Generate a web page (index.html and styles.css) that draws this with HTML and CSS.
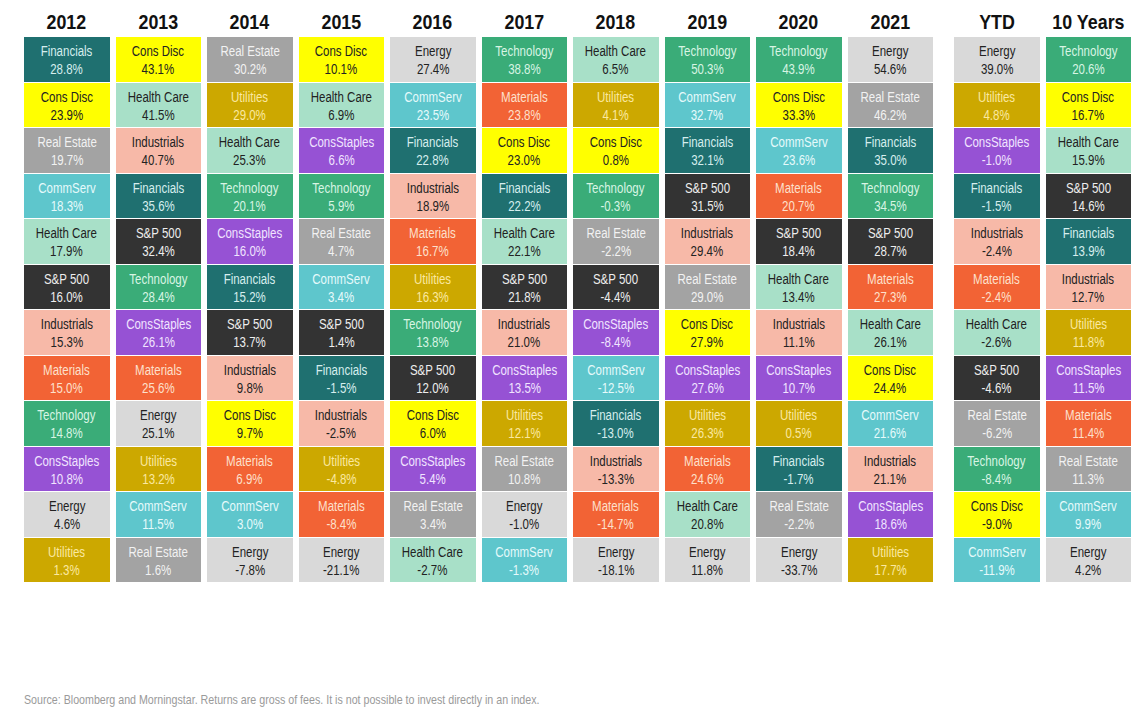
FILE: index.html
```html
<!DOCTYPE html>
<html>
<head>
<meta charset="utf-8">
<link rel="stylesheet" href="styles.css">
</head>
<body>
<div class="page">
  <div class="chart">
    <div class="group">
      <div class="col">
        <div class="hdr"><span class="t">2012</span></div>
        <div class="cell fin"><span class="t">Financials<br>28.8%</span></div>
        <div class="cell cd"><span class="t">Cons Disc<br>23.9%</span></div>
        <div class="cell re"><span class="t">Real Estate<br>19.7%</span></div>
        <div class="cell cs"><span class="t">CommServ<br>18.3%</span></div>
        <div class="cell hc"><span class="t">Health Care<br>17.9%</span></div>
        <div class="cell sp"><span class="t">S&amp;P 500<br>16.0%</span></div>
        <div class="cell ind"><span class="t">Industrials<br>15.3%</span></div>
        <div class="cell mat"><span class="t">Materials<br>15.0%</span></div>
        <div class="cell tech"><span class="t">Technology<br>14.8%</span></div>
        <div class="cell stap"><span class="t">ConsStaples<br>10.8%</span></div>
        <div class="cell en"><span class="t">Energy<br>4.6%</span></div>
        <div class="cell util"><span class="t">Utilities<br>1.3%</span></div>
      </div>
      <div class="col">
        <div class="hdr"><span class="t">2013</span></div>
        <div class="cell cd"><span class="t">Cons Disc<br>43.1%</span></div>
        <div class="cell hc"><span class="t">Health Care<br>41.5%</span></div>
        <div class="cell ind"><span class="t">Industrials<br>40.7%</span></div>
        <div class="cell fin"><span class="t">Financials<br>35.6%</span></div>
        <div class="cell sp"><span class="t">S&amp;P 500<br>32.4%</span></div>
        <div class="cell tech"><span class="t">Technology<br>28.4%</span></div>
        <div class="cell stap"><span class="t">ConsStaples<br>26.1%</span></div>
        <div class="cell mat"><span class="t">Materials<br>25.6%</span></div>
        <div class="cell en"><span class="t">Energy<br>25.1%</span></div>
        <div class="cell util"><span class="t">Utilities<br>13.2%</span></div>
        <div class="cell cs"><span class="t">CommServ<br>11.5%</span></div>
        <div class="cell re"><span class="t">Real Estate<br>1.6%</span></div>
      </div>
      <div class="col">
        <div class="hdr"><span class="t">2014</span></div>
        <div class="cell re"><span class="t">Real Estate<br>30.2%</span></div>
        <div class="cell util"><span class="t">Utilities<br>29.0%</span></div>
        <div class="cell hc"><span class="t">Health Care<br>25.3%</span></div>
        <div class="cell tech"><span class="t">Technology<br>20.1%</span></div>
        <div class="cell stap"><span class="t">ConsStaples<br>16.0%</span></div>
        <div class="cell fin"><span class="t">Financials<br>15.2%</span></div>
        <div class="cell sp"><span class="t">S&amp;P 500<br>13.7%</span></div>
        <div class="cell ind"><span class="t">Industrials<br>9.8%</span></div>
        <div class="cell cd"><span class="t">Cons Disc<br>9.7%</span></div>
        <div class="cell mat"><span class="t">Materials<br>6.9%</span></div>
        <div class="cell cs"><span class="t">CommServ<br>3.0%</span></div>
        <div class="cell en"><span class="t">Energy<br>-7.8%</span></div>
      </div>
      <div class="col">
        <div class="hdr"><span class="t">2015</span></div>
        <div class="cell cd"><span class="t">Cons Disc<br>10.1%</span></div>
        <div class="cell hc"><span class="t">Health Care<br>6.9%</span></div>
        <div class="cell stap"><span class="t">ConsStaples<br>6.6%</span></div>
        <div class="cell tech"><span class="t">Technology<br>5.9%</span></div>
        <div class="cell re"><span class="t">Real Estate<br>4.7%</span></div>
        <div class="cell cs"><span class="t">CommServ<br>3.4%</span></div>
        <div class="cell sp"><span class="t">S&amp;P 500<br>1.4%</span></div>
        <div class="cell fin"><span class="t">Financials<br>-1.5%</span></div>
        <div class="cell ind"><span class="t">Industrials<br>-2.5%</span></div>
        <div class="cell util"><span class="t">Utilities<br>-4.8%</span></div>
        <div class="cell mat"><span class="t">Materials<br>-8.4%</span></div>
        <div class="cell en"><span class="t">Energy<br>-21.1%</span></div>
      </div>
      <div class="col">
        <div class="hdr"><span class="t">2016</span></div>
        <div class="cell en"><span class="t">Energy<br>27.4%</span></div>
        <div class="cell cs"><span class="t">CommServ<br>23.5%</span></div>
        <div class="cell fin"><span class="t">Financials<br>22.8%</span></div>
        <div class="cell ind"><span class="t">Industrials<br>18.9%</span></div>
        <div class="cell mat"><span class="t">Materials<br>16.7%</span></div>
        <div class="cell util"><span class="t">Utilities<br>16.3%</span></div>
        <div class="cell tech"><span class="t">Technology<br>13.8%</span></div>
        <div class="cell sp"><span class="t">S&amp;P 500<br>12.0%</span></div>
        <div class="cell cd"><span class="t">Cons Disc<br>6.0%</span></div>
        <div class="cell stap"><span class="t">ConsStaples<br>5.4%</span></div>
        <div class="cell re"><span class="t">Real Estate<br>3.4%</span></div>
        <div class="cell hc"><span class="t">Health Care<br>-2.7%</span></div>
      </div>
      <div class="col">
        <div class="hdr"><span class="t">2017</span></div>
        <div class="cell tech"><span class="t">Technology<br>38.8%</span></div>
        <div class="cell mat"><span class="t">Materials<br>23.8%</span></div>
        <div class="cell cd"><span class="t">Cons Disc<br>23.0%</span></div>
        <div class="cell fin"><span class="t">Financials<br>22.2%</span></div>
        <div class="cell hc"><span class="t">Health Care<br>22.1%</span></div>
        <div class="cell sp"><span class="t">S&amp;P 500<br>21.8%</span></div>
        <div class="cell ind"><span class="t">Industrials<br>21.0%</span></div>
        <div class="cell stap"><span class="t">ConsStaples<br>13.5%</span></div>
        <div class="cell util"><span class="t">Utilities<br>12.1%</span></div>
        <div class="cell re"><span class="t">Real Estate<br>10.8%</span></div>
        <div class="cell en"><span class="t">Energy<br>-1.0%</span></div>
        <div class="cell cs"><span class="t">CommServ<br>-1.3%</span></div>
      </div>
      <div class="col">
        <div class="hdr"><span class="t">2018</span></div>
        <div class="cell hc"><span class="t">Health Care<br>6.5%</span></div>
        <div class="cell util"><span class="t">Utilities<br>4.1%</span></div>
        <div class="cell cd"><span class="t">Cons Disc<br>0.8%</span></div>
        <div class="cell tech"><span class="t">Technology<br>-0.3%</span></div>
        <div class="cell re"><span class="t">Real Estate<br>-2.2%</span></div>
        <div class="cell sp"><span class="t">S&amp;P 500<br>-4.4%</span></div>
        <div class="cell stap"><span class="t">ConsStaples<br>-8.4%</span></div>
        <div class="cell cs"><span class="t">CommServ<br>-12.5%</span></div>
        <div class="cell fin"><span class="t">Financials<br>-13.0%</span></div>
        <div class="cell ind"><span class="t">Industrials<br>-13.3%</span></div>
        <div class="cell mat"><span class="t">Materials<br>-14.7%</span></div>
        <div class="cell en"><span class="t">Energy<br>-18.1%</span></div>
      </div>
      <div class="col">
        <div class="hdr"><span class="t">2019</span></div>
        <div class="cell tech"><span class="t">Technology<br>50.3%</span></div>
        <div class="cell cs"><span class="t">CommServ<br>32.7%</span></div>
        <div class="cell fin"><span class="t">Financials<br>32.1%</span></div>
        <div class="cell sp"><span class="t">S&amp;P 500<br>31.5%</span></div>
        <div class="cell ind"><span class="t">Industrials<br>29.4%</span></div>
        <div class="cell re"><span class="t">Real Estate<br>29.0%</span></div>
        <div class="cell cd"><span class="t">Cons Disc<br>27.9%</span></div>
        <div class="cell stap"><span class="t">ConsStaples<br>27.6%</span></div>
        <div class="cell util"><span class="t">Utilities<br>26.3%</span></div>
        <div class="cell mat"><span class="t">Materials<br>24.6%</span></div>
        <div class="cell hc"><span class="t">Health Care<br>20.8%</span></div>
        <div class="cell en"><span class="t">Energy<br>11.8%</span></div>
      </div>
      <div class="col">
        <div class="hdr"><span class="t">2020</span></div>
        <div class="cell tech"><span class="t">Technology<br>43.9%</span></div>
        <div class="cell cd"><span class="t">Cons Disc<br>33.3%</span></div>
        <div class="cell cs"><span class="t">CommServ<br>23.6%</span></div>
        <div class="cell mat"><span class="t">Materials<br>20.7%</span></div>
        <div class="cell sp"><span class="t">S&amp;P 500<br>18.4%</span></div>
        <div class="cell hc"><span class="t">Health Care<br>13.4%</span></div>
        <div class="cell ind"><span class="t">Industrials<br>11.1%</span></div>
        <div class="cell stap"><span class="t">ConsStaples<br>10.7%</span></div>
        <div class="cell util"><span class="t">Utilities<br>0.5%</span></div>
        <div class="cell fin"><span class="t">Financials<br>-1.7%</span></div>
        <div class="cell re"><span class="t">Real Estate<br>-2.2%</span></div>
        <div class="cell en"><span class="t">Energy<br>-33.7%</span></div>
      </div>
      <div class="col">
        <div class="hdr"><span class="t">2021</span></div>
        <div class="cell en"><span class="t">Energy<br>54.6%</span></div>
        <div class="cell re"><span class="t">Real Estate<br>46.2%</span></div>
        <div class="cell fin"><span class="t">Financials<br>35.0%</span></div>
        <div class="cell tech"><span class="t">Technology<br>34.5%</span></div>
        <div class="cell sp"><span class="t">S&amp;P 500<br>28.7%</span></div>
        <div class="cell mat"><span class="t">Materials<br>27.3%</span></div>
        <div class="cell hc"><span class="t">Health Care<br>26.1%</span></div>
        <div class="cell cd"><span class="t">Cons Disc<br>24.4%</span></div>
        <div class="cell cs"><span class="t">CommServ<br>21.6%</span></div>
        <div class="cell ind"><span class="t">Industrials<br>21.1%</span></div>
        <div class="cell stap"><span class="t">ConsStaples<br>18.6%</span></div>
        <div class="cell util"><span class="t">Utilities<br>17.7%</span></div>
      </div>
    </div>
    <div class="group">
      <div class="col">
        <div class="hdr"><span class="t">YTD</span></div>
        <div class="cell en"><span class="t">Energy<br>39.0%</span></div>
        <div class="cell util"><span class="t">Utilities<br>4.8%</span></div>
        <div class="cell stap"><span class="t">ConsStaples<br>-1.0%</span></div>
        <div class="cell fin"><span class="t">Financials<br>-1.5%</span></div>
        <div class="cell ind"><span class="t">Industrials<br>-2.4%</span></div>
        <div class="cell mat"><span class="t">Materials<br>-2.4%</span></div>
        <div class="cell hc"><span class="t">Health Care<br>-2.6%</span></div>
        <div class="cell sp"><span class="t">S&amp;P 500<br>-4.6%</span></div>
        <div class="cell re"><span class="t">Real Estate<br>-6.2%</span></div>
        <div class="cell tech"><span class="t">Technology<br>-8.4%</span></div>
        <div class="cell cd"><span class="t">Cons Disc<br>-9.0%</span></div>
        <div class="cell cs"><span class="t">CommServ<br>-11.9%</span></div>
      </div>
      <div class="col">
        <div class="hdr"><span class="t">10 Years</span></div>
        <div class="cell tech"><span class="t">Technology<br>20.6%</span></div>
        <div class="cell cd"><span class="t">Cons Disc<br>16.7%</span></div>
        <div class="cell hc"><span class="t">Health Care<br>15.9%</span></div>
        <div class="cell sp"><span class="t">S&amp;P 500<br>14.6%</span></div>
        <div class="cell fin"><span class="t">Financials<br>13.9%</span></div>
        <div class="cell ind"><span class="t">Industrials<br>12.7%</span></div>
        <div class="cell util"><span class="t">Utilities<br>11.8%</span></div>
        <div class="cell stap"><span class="t">ConsStaples<br>11.5%</span></div>
        <div class="cell mat"><span class="t">Materials<br>11.4%</span></div>
        <div class="cell re"><span class="t">Real Estate<br>11.3%</span></div>
        <div class="cell cs"><span class="t">CommServ<br>9.9%</span></div>
        <div class="cell en"><span class="t">Energy<br>4.2%</span></div>
      </div>
    </div>
  </div>
  <p class="source"><span class="st">Source: Bloomberg and Morningstar. Returns are gross of fees. It is not possible to invest directly in an index.</span></p>
</div>
</body>
</html>
```
FILE: styles.css
```css
html, body {
  margin: 0;
  padding: 0;
  background: #ffffff;
  overflow: hidden;
}
.page {
  width: 1143px;
  height: 725px;
  padding: 0 0 0 24px;
  box-sizing: border-box;
  font-family: "Liberation Sans", Arial, sans-serif;
}
.chart {
  display: flex;
  gap: 21px;
}
.group {
  display: flex;
  gap: 6px;
}
.col {
  width: 85.5px;
  display: flex;
  flex-direction: column;
  gap: 1px;
}
.t {
  display: inline-block;
  white-space: nowrap;
  transform: scaleX(0.82);
  transform-origin: center;
}
.hdr {
  height: 36px;
  box-sizing: border-box;
  padding-top: 11px;
  text-align: center;
  font-weight: bold;
  font-size: 21px;
  line-height: 22px;
  color: #111;
}
.hdr .t {
  transform: scaleX(0.85);
}
.cell {
  height: 44.5px;
  box-sizing: border-box;
  padding-top: 5px;
  text-align: center;
  font-size: 14px;
  line-height: 18px;
}
.fin  { background: #1f7070; color: #d6eeee; }
.cd   { background: #ffff00; color: #222222; }
.re   { background: #a3a3a3; color: #f2f2f2; }
.cs   { background: #5ec6cc; color: #e6fafb; }
.hc   { background: #a8e0c8; color: #222222; }
.sp   { background: #333333; color: #eeeeee; }
.ind  { background: #f7b9a8; color: #222222; }
.mat  { background: #f26335; color: #fde0cc; }
.tech { background: #3aac78; color: #d8f5e4; }
.stap { background: #9652d4; color: #f1e4ff; }
.en   { background: #d9d9d9; color: #222222; }
.util { background: #cca800; color: #fbe9a0; }
.source {
  margin: 110px 0 0 0;
  font-size: 13px;
  line-height: 16px;
  color: #9a9a9a;
}
.st {
  display: inline-block;
  white-space: nowrap;
  transform: scaleX(0.82);
  transform-origin: left center;
}
```
